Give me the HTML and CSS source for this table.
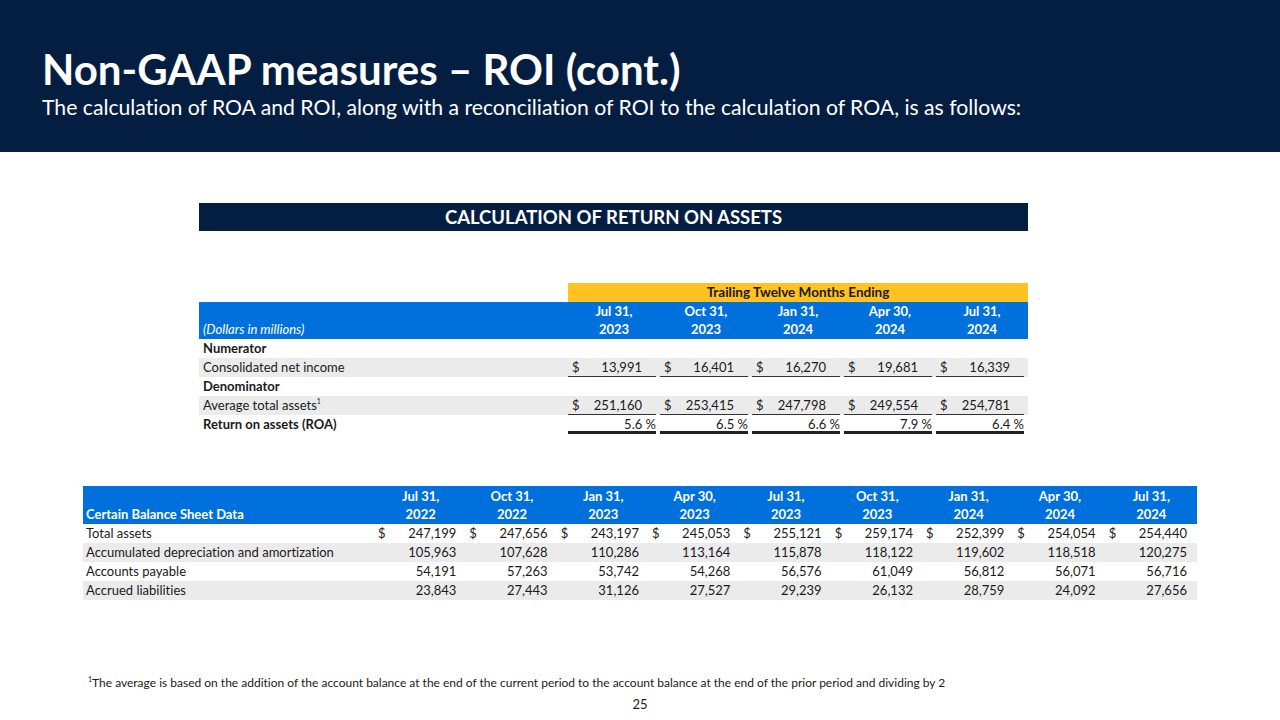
FILE: index.html
```html
<!DOCTYPE html>
<html>
<head>
<meta charset="utf-8">
<link rel="stylesheet" href="styles.css">
</head>
<body>
<header class="top">
  <h1 class="title">Non-GAAP measures – ROI (cont.)</h1>
  <p class="subtitle">The calculation of ROA and ROI, along with a reconciliation of ROI to the calculation of ROA, is as follows:</p>
</header>

<section class="roa">
  <div class="banner">CALCULATION OF RETURN ON ASSETS</div>
  <table class="t roa-t">
    <colgroup>
      <col class="c-label"><col class="c-num"><col class="c-num"><col class="c-num"><col class="c-num"><col class="c-num">
    </colgroup>
    <tr class="ttm"><td class="blank"></td><td colspan="5" class="ttm-cell">Trailing Twelve Months Ending</td></tr>
    <tr class="head">
      <td class="head-label"><i>(Dollars in millions)</i></td>
      <td class="hc">Jul 31,<br>2023</td>
      <td class="hc">Oct 31,<br>2023</td>
      <td class="hc">Jan 31,<br>2024</td>
      <td class="hc">Apr 30,<br>2024</td>
      <td class="hc">Jul 31,<br>2024</td>
    </tr>
    <tr><td class="lbl b">Numerator</td><td></td><td></td><td></td><td></td><td></td></tr>
    <tr class="gray">
      <td class="lbl">Consolidated net income</td>
      <td class="n"><div class="v ul"><span>$</span><span class="amt">13,991</span></div></td>
      <td class="n"><div class="v ul"><span>$</span><span class="amt">16,401</span></div></td>
      <td class="n"><div class="v ul"><span>$</span><span class="amt">16,270</span></div></td>
      <td class="n"><div class="v ul"><span>$</span><span class="amt">19,681</span></div></td>
      <td class="n"><div class="v ul"><span>$</span><span class="amt">16,339</span></div></td>
    </tr>
    <tr><td class="lbl b">Denominator</td><td></td><td></td><td></td><td></td><td></td></tr>
    <tr class="gray">
      <td class="lbl">Average total assets<sup>1</sup></td>
      <td class="n"><div class="v ul"><span>$</span><span class="amt">251,160</span></div></td>
      <td class="n"><div class="v ul"><span>$</span><span class="amt">253,415</span></div></td>
      <td class="n"><div class="v ul"><span>$</span><span class="amt">247,798</span></div></td>
      <td class="n"><div class="v ul"><span>$</span><span class="amt">249,554</span></div></td>
      <td class="n"><div class="v ul"><span>$</span><span class="amt">254,781</span></div></td>
    </tr>
    <tr>
      <td class="lbl b">Return on assets (ROA)</td>
      <td class="n"><div class="v dul"><span class="pct">5.6 %</span></div></td>
      <td class="n"><div class="v dul"><span class="pct">6.5 %</span></div></td>
      <td class="n"><div class="v dul"><span class="pct">6.6 %</span></div></td>
      <td class="n"><div class="v dul"><span class="pct">7.9 %</span></div></td>
      <td class="n"><div class="v dul"><span class="pct">6.4 %</span></div></td>
    </tr>
  </table>
</section>

<section class="bs">
  <table class="t bs-t">
    <colgroup>
      <col class="b-label"><col class="b-num"><col class="b-num"><col class="b-num"><col class="b-num"><col class="b-num"><col class="b-num"><col class="b-num"><col class="b-num"><col class="b-num">
    </colgroup>
    <tr class="head">
      <td class="head-label b">Certain Balance Sheet Data</td>
      <td class="hc">Jul 31,<br>2022</td>
      <td class="hc">Oct 31,<br>2022</td>
      <td class="hc">Jan 31,<br>2023</td>
      <td class="hc">Apr 30,<br>2023</td>
      <td class="hc">Jul 31,<br>2023</td>
      <td class="hc">Oct 31,<br>2023</td>
      <td class="hc">Jan 31,<br>2024</td>
      <td class="hc">Apr 30,<br>2024</td>
      <td class="hc">Jul 31,<br>2024</td>
    </tr>
    <tr>
      <td class="lbl">Total assets</td>
      <td class="m"><div class="v"><span>$</span><span>247,199</span></div></td>
      <td class="m"><div class="v"><span>$</span><span>247,656</span></div></td>
      <td class="m"><div class="v"><span>$</span><span>243,197</span></div></td>
      <td class="m"><div class="v"><span>$</span><span>245,053</span></div></td>
      <td class="m"><div class="v"><span>$</span><span>255,121</span></div></td>
      <td class="m"><div class="v"><span>$</span><span>259,174</span></div></td>
      <td class="m"><div class="v"><span>$</span><span>252,399</span></div></td>
      <td class="m"><div class="v"><span>$</span><span>254,054</span></div></td>
      <td class="m"><div class="v"><span>$</span><span>254,440</span></div></td>
    </tr>
    <tr class="gray">
      <td class="lbl">Accumulated depreciation and amortization</td>
      <td class="m"><div class="v r">105,963</div></td>
      <td class="m"><div class="v r">107,628</div></td>
      <td class="m"><div class="v r">110,286</div></td>
      <td class="m"><div class="v r">113,164</div></td>
      <td class="m"><div class="v r">115,878</div></td>
      <td class="m"><div class="v r">118,122</div></td>
      <td class="m"><div class="v r">119,602</div></td>
      <td class="m"><div class="v r">118,518</div></td>
      <td class="m"><div class="v r">120,275</div></td>
    </tr>
    <tr>
      <td class="lbl">Accounts payable</td>
      <td class="m"><div class="v r">54,191</div></td>
      <td class="m"><div class="v r">57,263</div></td>
      <td class="m"><div class="v r">53,742</div></td>
      <td class="m"><div class="v r">54,268</div></td>
      <td class="m"><div class="v r">56,576</div></td>
      <td class="m"><div class="v r">61,049</div></td>
      <td class="m"><div class="v r">56,812</div></td>
      <td class="m"><div class="v r">56,071</div></td>
      <td class="m"><div class="v r">56,716</div></td>
    </tr>
    <tr class="gray">
      <td class="lbl">Accrued liabilities</td>
      <td class="m"><div class="v r">23,843</div></td>
      <td class="m"><div class="v r">27,443</div></td>
      <td class="m"><div class="v r">31,126</div></td>
      <td class="m"><div class="v r">27,527</div></td>
      <td class="m"><div class="v r">29,239</div></td>
      <td class="m"><div class="v r">26,132</div></td>
      <td class="m"><div class="v r">28,759</div></td>
      <td class="m"><div class="v r">24,092</div></td>
      <td class="m"><div class="v r">27,656</div></td>
    </tr>
  </table>
</section>

<footer class="foot">
  <p class="note"><sup>1</sup>The average is based on the addition of the account balance at the end of the current period to the account balance at the end of the prior period and dividing by 2</p>
  <p class="page">25</p>
</footer>
</body>
</html>
```

FILE: styles.css
```css
html, body {
  margin: 0;
  padding: 0;
  background: #ffffff;
  font-family: Lato, "Open Sans", sans-serif;
  font-variant-ligatures: none;
  color: #1a1a1a;
}
body {
  width: 1280px;
  height: 720px;
  overflow: hidden;
}
.top {
  background: #041e42;
  height: 152px;
  box-sizing: border-box;
  padding: 45px 0 0 42px;
  color: #ffffff;
}
.title {
  margin: 0;
  font-size: 42px;
  font-weight: 700;
  line-height: 48px;
}
.subtitle {
  margin: 2px 0 0 0;
  font-size: 21.2px;
  line-height: 24px;
  font-weight: 400;
}
.roa {
  margin: 51px 0 0 199px;
  width: 829px;
}
.banner {
  background: #041e42;
  color: #ffffff;
  height: 28px;
  line-height: 29px;
  text-align: center;
  font-weight: 700;
  font-size: 18.5px;
}
.t {
  border-collapse: collapse;
  table-layout: fixed;
  font-size: 13px;
}
.t td {
  padding: 0;
  height: 19px;
  line-height: 19px;
  white-space: nowrap;
}
.roa-t {
  width: 829px;
  margin-top: 52px;
}
.c-label { width: 369px; }
.c-num { width: 92px; }
.ttm-cell {
  background: #ffc220;
  text-align: center;
  font-weight: 700;
  font-size: 13.5px;
  color: #1a1a1a;
}
.ttm td { height: 19px; line-height: 19px; }
.head td {
  background: #0071dc;
  color: #ffffff;
  height: 36px;
  line-height: 18px;
  vertical-align: bottom;
  padding-bottom: 1px;
}
.hc {
  text-align: center;
  font-weight: 700;
}
.head-label {
  padding-left: 4px !important;
}
.b { font-weight: 700; }
.lbl { padding-left: 4px !important; }
.gray td { background: #ebebeb; }
.n { padding-right: 4px !important; }
.n .v {
  display: flex;
  justify-content: space-between;
  height: 19px;
  padding-left: 4px;
  box-sizing: border-box;
}
.n .amt { padding-right: 14px; }
.v.ul { border-bottom: 1.5px solid #333; }
.v.dul {
  border-bottom: 3px solid #222;
  justify-content: flex-end;
}
sup {
  font-size: 7px;
  line-height: 0;
  vertical-align: 6px;
}
.bs {
  margin: 52px 0 0 83px;
  width: 1114px;
}
.bs-t { width: 1114px; }
.bs-t .head td { height: 37px; }
.b-label { width: 292px; }
.b-num { width: 91.33px; }
.bs-t .head-label { padding-left: 3px !important; }
.bs-t .lbl { padding-left: 3px !important; }
.m .v {
  display: flex;
  justify-content: space-between;
  padding: 0 10px 0 3px;
}
.m .v.r { justify-content: flex-end; }
.foot {
  margin: 75px 0 0 88px;
}
.note {
  margin: 0;
  font-size: 12px;
  line-height: 16px;
}
.note sup { vertical-align: 5px; }
.page {
  margin: 4px 0 0 -88px;
  text-align: center;
  font-size: 13px;
  line-height: 18px;
}
```
